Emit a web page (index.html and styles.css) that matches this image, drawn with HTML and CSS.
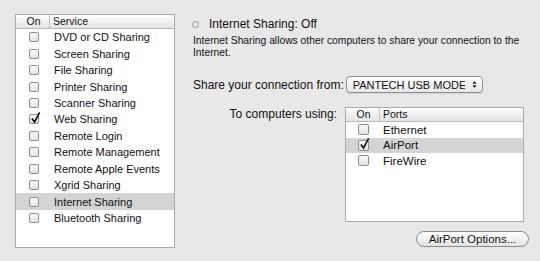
FILE: index.html
```html
<!DOCTYPE html>
<html>
<head>
<meta charset="utf-8">
<link rel="stylesheet" href="styles.css">
</head>
<body>
<div class="pane">
  <div class="table services">
    <div class="thead">
      <div class="th on">On</div>
      <div class="th name">Service</div>
    </div>
    <div class="row"><span class="cb"></span><span class="label">DVD or CD Sharing</span></div>
    <div class="row"><span class="cb"></span><span class="label">Screen Sharing</span></div>
    <div class="row"><span class="cb"></span><span class="label">File Sharing</span></div>
    <div class="row"><span class="cb"></span><span class="label">Printer Sharing</span></div>
    <div class="row"><span class="cb"></span><span class="label">Scanner Sharing</span></div>
    <div class="row"><span class="cb checked"><svg viewBox="0 0 12 14" class="tick"><path d="M2 8.2 L5 12 L10.5 1.5" /></svg></span><span class="label">Web Sharing</span></div>
    <div class="row"><span class="cb"></span><span class="label">Remote Login</span></div>
    <div class="row"><span class="cb"></span><span class="label">Remote Management</span></div>
    <div class="row"><span class="cb"></span><span class="label">Remote Apple Events</span></div>
    <div class="row"><span class="cb"></span><span class="label">Xgrid Sharing</span></div>
    <div class="row selected"><span class="cb"></span><span class="label">Internet Sharing</span></div>
    <div class="row"><span class="cb"></span><span class="label">Bluetooth Sharing</span></div>
  </div>

  <div class="detail">
    <div class="status">
      <span class="radio"></span>
      <span class="status-text">Internet Sharing: Off</span>
    </div>
    <p class="desc">Internet Sharing allows other computers to share your connection to the Internet.</p>

    <div class="share-row">
      <span class="field-label">Share your connection from:</span>
      <div class="popup">
        <span class="popup-text">PANTECH USB MODEM</span>
        <svg class="arrows" viewBox="0 0 6 10"><path d="M0.5 4 L3 0.8 L5.5 4 Z M0.5 6 L3 9.2 L5.5 6 Z"/></svg>
      </div>
    </div>

    <div class="to-row">
      <span class="field-label right">To computers using:</span>
      <div class="table ports">
        <div class="thead">
          <div class="th on">On</div>
          <div class="th name">Ports</div>
        </div>
        <div class="row"><span class="cb"></span><span class="label">Ethernet</span></div>
        <div class="row selected"><span class="cb checked"><svg viewBox="0 0 12 14" class="tick"><path d="M2 8.2 L5 12 L10.5 1.5" /></svg></span><span class="label">AirPort</span></div>
        <div class="row"><span class="cb"></span><span class="label">FireWire</span></div>
      </div>
    </div>

    <div class="button-row">
      <button class="pill">AirPort Options...</button>
    </div>
  </div>
</div>
</body>
</html>
```

FILE: styles.css
```css
html, body {
  margin: 0;
  padding: 0;
  background: #e8e8e8;
}
body {
  width: 540px;
  height: 261px;
  overflow: hidden;
  font-family: "Liberation Sans", Arial, sans-serif;
  color: #111;
}
.pane {
  display: flex;
  padding: 14px 0 0 15px;
}

/* tables */
.table {
  box-sizing: border-box;
  background: #fff;
  border: 1px solid #a9a9a9;
  display: flex;
  flex-direction: column;
}
.services {
  width: 160px;
  height: 234px;
}
.ports {
  width: 179px;
  height: 115px;
}
.thead {
  display: flex;
  height: 13px;
  background: linear-gradient(#ffffff, #f0f0f0 50%, #e4e4e4);
  border-bottom: 1px solid #b9b9b9;
  font-size: 10.5px;
  line-height: 13px;
}
.th.on {
  width: 34px;
  text-align: center;
  border-right: 1px solid #c4c4c4;
  padding-left: 2px;
  box-sizing: border-box;
}
.th.name {
  padding-left: 3px;
}
.row {
  display: flex;
  align-items: center;
  height: 16.45px;
  font-size: 11px;
}
.ports .row {
  height: 15.5px;
  font-size: 11.5px;
}
.ports .row:first-of-type {
  margin-top: 1px;
}
.row.selected {
  background: #d4d4d4;
}
.cb {
  position: relative;
  box-sizing: border-box;
  width: 10px;
  height: 10px;
  margin-left: 13px;
  margin-right: 15px;
  border: 1px solid #8e8e8e;
  border-radius: 2px;
  background: linear-gradient(#fafafa, #e2e2e2);
  flex: none;
}
.ports .cb {
  width: 11px;
  height: 11px;
  margin-left: 12px;
  margin-right: 14px;
}
.tick {
  position: absolute;
  left: 0px;
  top: -4px;
  width: 11px;
  height: 13px;
  overflow: visible;
}
.tick path {
  fill: none;
  stroke: #111;
  stroke-width: 1.8;
  stroke-linejoin: miter;
}
.label {
  white-space: nowrap;
}

/* detail panel */
.detail {
  display: flex;
  flex-direction: column;
  margin-left: 17px;
  width: 340px;
}
.status {
  display: flex;
  align-items: center;
  margin-top: 3px;
  height: 14px;
}
.radio {
  box-sizing: border-box;
  width: 7px;
  height: 7px;
  border-radius: 50%;
  border: 1px solid #9a9a9a;
  background: radial-gradient(#f4f4f4, #d8d8d8);
  margin-right: 10px;
}
.status-text {
  font-size: 12px;
}
.desc {
  margin: 4px 0 0 1px;
  font-size: 10.3px;
  line-height: 12px;
  width: 330px;
}
.share-row {
  display: flex;
  align-items: center;
  margin-top: 17px;
  margin-left: 1px;
}
.field-label {
  font-size: 12px;
  white-space: nowrap;
}
.popup {
  box-sizing: border-box;
  position: relative;
  display: flex;
  align-items: center;
  width: 137px;
  height: 17px;
  margin-left: 2px;
  border: 1px solid #8f8f8f;
  border-radius: 4px;
  background: linear-gradient(#ffffff, #f3f3f3 50%, #e6e6e6);
  box-shadow: 0 1px 0 rgba(0,0,0,0.08);
}
.popup-text {
  width: 112px;
  margin-left: 6px;
  overflow: hidden;
  white-space: nowrap;
  font-size: 11px;
}
.arrows {
  width: 5px;
  height: 9px;
  margin-left: 7px;
  fill: #222;
}
.to-row {
  display: flex;
  align-items: flex-start;
  margin-top: 14px;
}
.field-label.right {
  width: 145px;
  text-align: right;
  margin-top: 0px;
  margin-right: 8px;
}
.button-row {
  display: flex;
  justify-content: flex-end;
  margin-top: 9px;
  width: 337px;
}
.pill {
  box-sizing: border-box;
  width: 113px;
  height: 16px;
  padding: 0;
  border: 1px solid #8a8a8a;
  border-radius: 8px;
  background: linear-gradient(#ffffff, #f2f2f2 50%, #e2e2e2);
  font-family: "Liberation Sans", Arial, sans-serif;
  font-size: 11.5px;
  line-height: 14px;
  color: #111;
}
```
